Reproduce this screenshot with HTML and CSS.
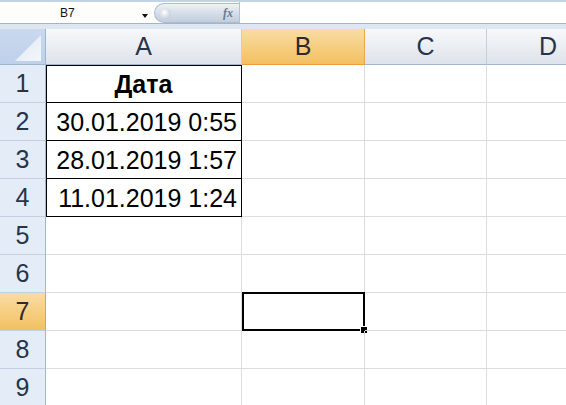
FILE: index.html
```html
<!DOCTYPE html>
<html>
<head>
<meta charset="utf-8">
<link rel="stylesheet" href="styles.css">
</head>
<body>
<div class="fbar">
  <div class="namebox"><span class="nb-text">B7</span><span class="nb-arrow"></span></div>
  <div class="pill"><span class="knob"></span><span class="fx">fx</span></div>
  <div class="finput"></div>
</div>
<div class="gap"></div>
<div class="sheet">
  <div class="corner"><svg width="46" height="36" viewBox="0 0 46 36"><defs><linearGradient id="tg" x1="0" y1="0" x2="1" y2="1"><stop offset="0" stop-color="#dfe8f4"/><stop offset="1" stop-color="#f4f7fb"/></linearGradient></defs><polygon points="41,6 41,32 15,32" fill="url(#tg)"/></svg></div>
  <div class="ch">A</div>
  <div class="ch sel">B</div>
  <div class="ch">C</div>
  <div class="ch last">D</div>

  <div class="rh">1</div><div class="c ca top hdr">Дата</div><div class="c"></div><div class="c"></div><div class="c last"></div>
  <div class="rh">2</div><div class="c ca num">30.01.2019 0:55</div><div class="c"></div><div class="c"></div><div class="c last"></div>
  <div class="rh">3</div><div class="c ca num">28.01.2019 1:57</div><div class="c"></div><div class="c"></div><div class="c last"></div>
  <div class="rh">4</div><div class="c ca num">11.01.2019 1:24</div><div class="c"></div><div class="c"></div><div class="c last"></div>
  <div class="rh">5</div><div class="c"></div><div class="c"></div><div class="c"></div><div class="c last"></div>
  <div class="rh">6</div><div class="c"></div><div class="c"></div><div class="c"></div><div class="c last"></div>
  <div class="rh sel">7</div><div class="c"></div><div class="c active"><span class="selbox"></span><span class="handle"></span></div><div class="c"></div><div class="c last"></div>
  <div class="rh">8</div><div class="c"></div><div class="c"></div><div class="c"></div><div class="c last"></div>
  <div class="rh">9</div><div class="c"></div><div class="c"></div><div class="c"></div><div class="c last"></div>
</div>
</body>
</html>
```

FILE: styles.css
```css
html, body {
  margin: 0;
  padding: 0;
  width: 566px;
  height: 405px;
  overflow: hidden;
  background: #ffffff;
  font-family: "Liberation Sans", Arial, sans-serif;
}

.fbar {
  display: flex;
  height: 21px;
  border-top: 2px solid #c3d3e6;
  border-bottom: 1px solid #a3b4c9;
  background: #fdfdfc;
}

.namebox {
  width: 154px;
  position: relative;
  display: flex;
  align-items: center;
  font-size: 12px;
  color: #111;
}

.nb-text {
  padding-left: 60px;
}

.nb-arrow {
  position: absolute;
  left: 142px;
  top: 12px;
  width: 0;
  height: 0;
  border-left: 3px solid transparent;
  border-right: 3px solid transparent;
  border-top: 4px solid #111;
}

.pill {
  width: 85px;
  margin-top: 1px;
  border-radius: 11px 0 0 11px;
  background: linear-gradient(#eef2f7, #d3dce8 55%, #c2cddc);
  border: 1px solid #aebccf;
  border-right: none;
  box-sizing: border-box;
  display: flex;
  align-items: center;
  justify-content: space-between;
  padding: 0 6px 0 5px;
}

.knob {
  width: 11px;
  height: 11px;
  border-radius: 50%;
  background: radial-gradient(circle at 40% 40%, #ffffff, #c9d1dc 70%, #aab5c4);
}

.fx {
  font-family: "Liberation Serif", serif;
  font-style: italic;
  font-weight: bold;
  font-size: 12px;
  color: #6c7a8c;
}

.finput {
  flex: 1;
  background: #ffffff;
  border-left: 1px solid #b4c1d2;
}

.gap {
  height: 5px;
  background: #dde6f1;
}

.sheet {
  display: grid;
  grid-template-columns: 46px 196px 123px 122px 79px;
  grid-template-rows: 36px repeat(9, 38px);
  width: 566px;
}

.corner {
  background: linear-gradient(#c9d9ee, #bed1ea);
  border-right: 1px solid #9eb6ce;
  border-bottom: 1px solid #9eb6ce;
  box-sizing: border-box;
  overflow: hidden;
}

.corner svg {
  display: block;
}

.ch {
  box-sizing: border-box;
  background: linear-gradient(#f7f8fa, #e9edf2 55%, #dde3ea);
  border-right: 1px solid #c5cfdb;
  border-bottom: 1px solid #9eb6ce;
  display: flex;
  align-items: center;
  justify-content: center;
  font-size: 25px;
  color: #27344a;
}

.ch.last {
  border-right: none;
  justify-content: flex-start;
  padding-left: 52px;
}

.c.last {
  border-right: none;
}

.ch.sel {
  background: linear-gradient(#f9dca5, #f6cd7f 55%, #f2c061);
  border-right: 1px solid #eaa94b;
  border-bottom: 1px solid #f29b38;
  color: #2c2c2c;
}

.rh {
  box-sizing: border-box;
  background: #e4ecf7;
  border-right: 1px solid #9eb6ce;
  border-bottom: 1px solid #c2d0e1;
  display: flex;
  align-items: flex-end;
  justify-content: center;
  padding-bottom: 4px;
  font-size: 25px;
  color: #27344a;
}

.rh.sel {
  background: linear-gradient(#f9dca5, #f6cd7f 55%, #f2c061);
  border-right: 1px solid #f29b38;
  color: #2c2c2c;
}

.c {
  box-sizing: border-box;
  border-right: 1px solid #dadcdd;
  border-bottom: 1px solid #dadcdd;
  display: flex;
  align-items: flex-end;
  padding: 0 4px 3px 4px;
  font-size: 25px;
  color: #000;
  position: relative;
}

.c.ca {
  border-right: 1px solid #000;
  border-bottom: 1px solid #000;
  box-shadow: inset 1px 0 0 #000;
}

.c.top {
  box-shadow: inset 1px 1px 0 #000;
}

.hdr {
  justify-content: center;
  font-weight: bold;
}

.num {
  justify-content: flex-end;
}

.selbox {
  position: absolute;
  left: 0;
  top: -1px;
  width: 123px;
  height: 39px;
  box-sizing: border-box;
  border: 2px solid #000;
}

.handle {
  position: absolute;
  right: -4px;
  bottom: -4px;
  width: 6px;
  height: 6px;
  background: #000;
  border: 1px solid #fff;
}
```
